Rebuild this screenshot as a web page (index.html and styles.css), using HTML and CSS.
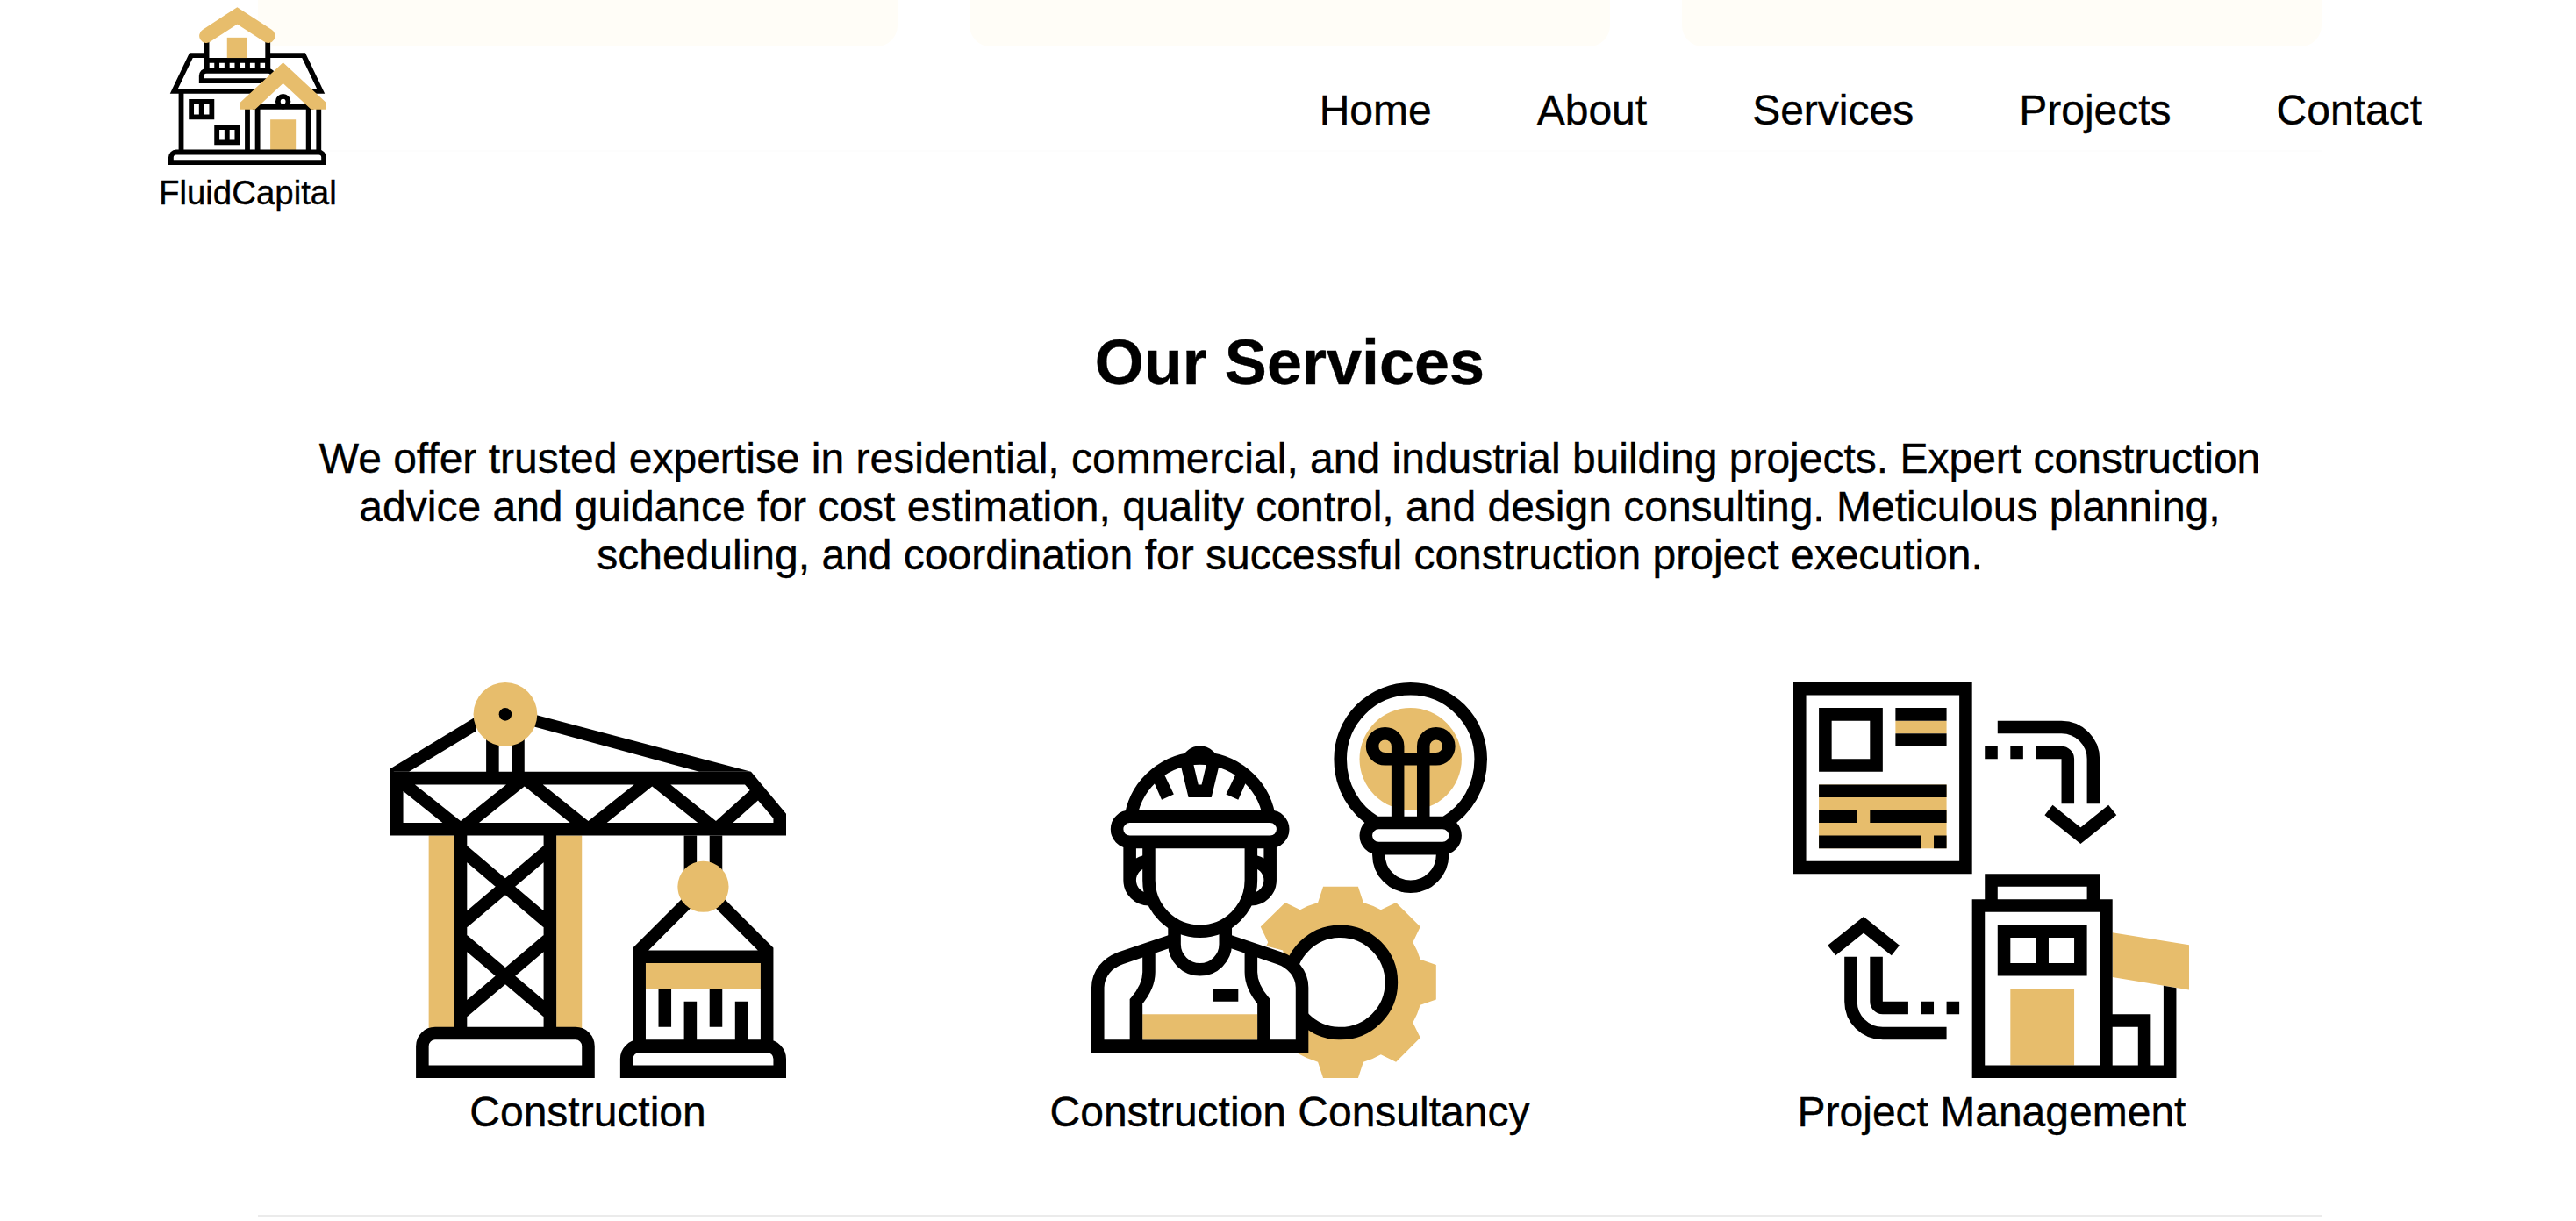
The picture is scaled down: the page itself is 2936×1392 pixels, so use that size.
FILE: index.html
```html
<!DOCTYPE html>
<html lang="en">
<head>
<meta charset="utf-8">
<title>FluidCapital</title>
<link rel="stylesheet" href="styles.css">
</head>
<body>
<header class="header">
  <a class="logo">
    <svg class="logo-icon" viewBox="0 0 31 31">
      <path class="line" d="M7.5 9.5H4.45L1.1 16.5H29.9L26.55 9.5H19.5M2.5 16.5V29M7.5 6V12M19.5 6V12"/>
      <path class="ink" fill-rule="evenodd" d="M7 10H20V13H7zM8 11V12.1H9V11zM10 11V12.1H11V11zM12 11V12.1H13V11zM14 11V12.1H15V11zM16 11V12.1H17V11zM18 11V12.1H19V11z"/>
      <path class="line" d="M21 14.5H6.5V13.5a1 1 0 0 1 1-1H19.5a1 1 0 0 1 1 1"/>
      <path class="gold" d="M11.5 6h4v4h-4z"/>
      <path class="roof" d="M7.45 5.65L13.5 1.7L19.55 5.65"/>
      <path class="ink" fill-rule="evenodd" d="M4 18.1H9V22.1H4zM5 19.1V21.1H6V19.1zM7 19.1V21.1H8V19.1zM9 23.1H14V27.1H9zM10 24.1V26.1H11V24.1zM12 24.1V26.1H13V24.1z"/>
      <path class="paper" d="M15 20L22.5 13L30 20V28H15z"/>
      <path class="line" d="M15.5 19V29M17.5 19V29M27.5 19V29M29.5 19V29M16.5 19.6H28.5"/>
      <circle class="line paper" cx="22.5" cy="18.55" r="1"/>
      <path class="gold" d="M22.5 10.9L31 18.8V20.1H28L22.5 15L17 20.1H14V18.8zM20 22.1h5V28.5h-5z"/>
      <path class="line paper" d="M.5 30.5v-1a1 1 0 0 1 1-1h28a1 1 0 0 1 1 1v1z"/>
    </svg>
    <span class="logo-name">FluidCapital</span>
  </a>
  <nav class="nav">
    <a>Home</a><a>About</a><a>Services</a><a>Projects</a><a>Contact</a>
  </nav>
</header>

<main class="page">
  <div class="cards">
    <div class="card"></div><div class="card"></div><div class="card"></div>
  </div>

  <section class="services">
    <h2 class="title">Our Services</h2>
    <p class="intro">We offer trusted expertise in residential, commercial, and industrial building projects. Expert construction advice and guidance for cost estimation, quality control, and design consulting. Meticulous planning, scheduling, and coordination for successful construction project execution.</p>
    <div class="service-list">
      <div class="service">
        <svg class="service-icon" viewBox="0 0 31 31">
          <path class="gold" d="M3 12h2v15.5H3zM13 12h2v15.5h-2zM20 22h9v2h-9z"/>
          <path class="ink" d="M7.5 4h1v3.5h-1zM9.5 4h1v3.5h-1z"/>
          <path class="ink" d="M11.2 2.5L28.25 7H24.2L11.2 3.45zM6.7 2.68V3.82L1.45 7L0 7V6.75z"/>
          <path class="ink" fill-rule="evenodd" d="M0 6.75L.3 7H28.25L31 10.3V12H0zM1 8.52V11H4.08zM1.92 8H9.07L5.5 10.86zM10.5 8.14L6.94 11H14.07zM11.94 8H19.09L15.5 10.86zM20.5 8.14L16.96 11H24.08zM21.95 8H27.77L28.16 8.45L25.5 10.86zM28.8 9.25L30 10.65V11H26.83z"/>
          <path class="line" d="M5.5 11.5V27.5M12.5 11.5V27.5M5.7 13.2L12.3 18.8M12.3 13.2L5.7 18.8M5.7 20.2L12.3 25.8M12.3 20.2L5.7 25.8"/>
          <path class="line" d="M2.5 30.5v-2a1 1 0 0 1 1-1h11a1 1 0 0 1 1 1v2z"/>
          <path class="line" d="M23.5 12v3.5M25.5 12v3.5M19.5 28.5V21L23.5 17M29.5 28.5V21L25.5 17M19.5 21.5h10M21.5 24v3M23.5 25v3.5M25.5 24v3M27.5 25v3.5"/>
          <path class="line" d="M18.5 30.5v-1a1 1 0 0 1 1-1h10a1 1 0 0 1 1 1v1z"/>
          <circle class="gold" cx="9" cy="2.5" r="2.5"/>
          <circle class="ink" cx="9" cy="2.5" r=".5"/>
          <circle class="gold" cx="24.5" cy="16" r="2"/>
        </svg>
        <span class="label">Construction</span>
      </div>
      <div class="service">
        <svg class="service-icon" viewBox="0 0 31 31">
          <path class="gold" d="M18.15 16H20.89L21.3 17.25Q22 17.45 22.67 17.82L23.86 17.25L25.76 19.15L25.18 20.36Q25.55 21 25.76 21.7L27 22.13V24.85L25.76 25.28Q25.55 26 25.18 26.65L25.76 27.83L23.86 29.75L22.67 29.16Q22 29.55 21.3 29.75L20.89 31H18.15L17.74 29.75Q16.8 29.45 16.04 29L15 21L13.7 20.65L13.83 20.36L13.25 19.15L15.18 17.25L16.35 17.82Q17 17.45 17.74 17.25z"/>
          <circle class="line paper" cx="19.5" cy="23.5" r="4"/>
          <path class="line paper" d="M.5 28.5V23.9C.5 22.85 1.25 21.95 2.3 21.6L6.5 20.17H10.5L14.7 21.6C15.75 21.95 16.5 22.85 16.5 23.9V28.5z"/>
          <path class="gold" d="M4 26h9v2H4z"/>
          <path class="line" d="M4.5 21V22.7C4.5 23.6 4.1 24.3 3.5 25V28.5M12.5 21V22.7C12.5 23.6 12.9 24.3 13.5 25V28.5"/>
          <path class="line paper" d="M6.5 18.9V20.5a2 2 0 0 0 4 0V18.9"/>
          <path class="line" d="M3 12.5V15.5a1.5 1.5 0 0 0 1.5 1.5M3 15.5a1.5 1.5 0 0 1 1.5-1.5M14 12.5V15.5a1.5 1.5 0 0 1-1.5 1.5M14 15.5a1.5 1.5 0 0 0-1.5-1.5"/>
          <path class="line paper" d="M4.5 12.5V15.5a4 4 0 0 0 8 0V12.5"/>
          <rect class="line paper" x="2" y="10.5" width="13" height="2" rx="1"/>
          <path class="line" d="M3.1 10.4A5.5 5.5 0 0 1 13.9 10.4"/>
          <path class="ink" fill-rule="evenodd" d="M7.3 5.55C7.7 5.15 8 4.98 8.5 4.98S9.3 5.15 9.7 5.55L9.97 6.63L9.4 9H7.6L7.03 6.63zM8 6.45L8.37 8H8.63L9 6.45a.5.5 0 0 0-1 0z"/>
          <path class="ink" d="M4.8 7.6L5.6 7L6.45 8.76L5.5 9.2zM12.2 7.6L11.4 7L10.55 8.76L11.5 9.2zM9.5 24h2v1h-2z"/>
          <circle class="gold" cx="25" cy="6" r="4"/>
          <path class="line" d="M22.3 11C20.6 10 19.5 8.2 19.5 6a5.5 5.5 0 0 1 11 0C30.5 8.2 29.4 10 27.7 11"/>
          <path class="line" d="M24 11V5a1 1 0 1 0-1 1H27a1 1 0 1 0-1-1V11"/>
          <path class="line" d="M22.5 13v.5a2.5 2.5 0 0 0 5 0V13"/>
          <rect class="line paper" x="21.5" y="11" width="7" height="2" rx="1"/>
        </svg>
        <span class="label">Construction Consultancy</span>
      </div>
      <div class="service">
        <svg class="service-icon" viewBox="0 0 31 31">
          <path class="gold" d="M8 3h4v1H8zM2 8h10v5H2zM17 24h5v6h-5zM25 19.6L31 20.57V24.1L25 23.1z"/>
          <path class="line" d="M.5.5h13v14H.5zM2.5 2.5h4v4h-4zM8 2.5h4M8 4.5h4M2 8.5h10M2 10.5h3M6 10.5h6M2 12.5h8M11 12.5h1"/>
          <path class="line" d="M16 3.5h5a2.5 2.5 0 0 1 2.5 2.5V9.5M15 5.5h1M17 5.5h1M19 5.5h2a.5.5 0 0 1 .5.5V9.5M20 10L22.5 12L25 10"/>
          <path class="line" d="M12 27.5H7a2.5 2.5 0 0 1-2.5-2.5V21.5M13 25.5h-1M11 25.5h-1M9 25.5H7a.5.5 0 0 1-.5-.5V21.5M3 21L5.5 19L8 21"/>
          <path class="line" d="M15.5 17.5V15.5h8v2M14.5 17.5h10v13h-10zM16.5 19.5h6v3h-6zM19.5 19.5v3M25 26.5h2.5v4M24.5 30.5h5"/>
          <path class="ink" d="M29 23.77L30 23.93V31H29z"/>
        </svg>
        <span class="label">Project Management</span>
      </div>
    </div>
  </section>
</main>
</body>
</html>
```
FILE: styles.css
```css
* { box-sizing: border-box; }

body {
  margin: 0;
  height: 1392px;
  overflow: hidden;
  background: #fff;
  color: #000;
  font-family: "Liberation Sans", Arial, sans-serif;
  font-size: 48px;
  line-height: 55px;
  -webkit-text-stroke: 0.4px #000;
}

.header {
  position: absolute;
  top: 0;
  left: 0;
  width: 100%;
  display: flex;
  justify-content: space-between;
  align-items: flex-start;
  padding: 8px 176px 0 181px;
}

.logo {
  display: flex;
  flex-direction: column;
  align-items: center;
}

.logo-icon { width: 180px; height: 180px; }

.logo-name {
  margin-top: 10px;
  font-size: 38.4px;
  line-height: 43px;
}

.nav {
  display: flex;
  gap: 120px;
  padding-top: 90px;
}

.page {
  width: 2352px;
  margin: 0 auto 0 294px;
}

.cards {
  display: grid;
  grid-template-columns: repeat(3, 1fr);
  gap: 82px;
  height: 173px;
  border-bottom: 2px solid #fdfdfd;
}

.card {
  height: 53px;
  background: #fffdf7;
  border-radius: 0 0 24px 24px;
}

.services {
  height: 1214px;
  padding-top: 198px;
  border-bottom: 2px solid #ebebeb;
}

.title {
  margin: 0;
  font-size: 72px;
  line-height: 84px;
  text-align: center;
}

.intro {
  margin: 40px 0 0;
  padding: 0 50px;
  text-align: center;
}

.service-list {
  display: flex;
  justify-content: space-around;
  margin-top: 118px;
}

.service {
  display: flex;
  flex-direction: column;
  align-items: center;
}

.service-icon { width: 451px; height: 451px; }

.label { margin-top: 11px; }

.gold { fill: #e7bd6c; }
.ink { fill: #000; }
.line { fill: none; stroke: #000; stroke-width: 1; }
.paper { fill: #fff; }
.roof { fill: none; stroke: #e7bd6c; stroke-width: 2.8; stroke-linecap: round; }
```
